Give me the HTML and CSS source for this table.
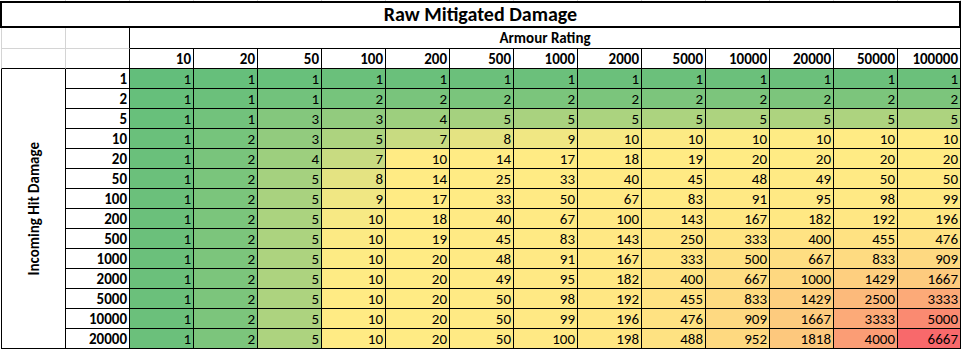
FILE: index.html
```html
<!DOCTYPE html>
<html lang="en">
<head>
<meta charset="utf-8">
<title>Raw Mitigated Damage</title>
<link rel="stylesheet" href="styles.css">
</head>
<body>
<div class="sheet">
  <div class="stubs">
    <div></div><div></div><div></div><div></div><div></div><div></div><div></div><div></div><div></div><div></div><div></div><div></div><div></div><div></div><div></div>
  </div>
  <div class="title">Raw Mitigated Damage</div>
  <div class="grid" id="grid">
    <div class="c g ga"></div><div class="c g gb"></div><div class="c armour">Armour Rating</div>
    <div class="c g ga gl"></div><div class="c g gb gl"></div>
    <div class="c h">10</div><div class="c h">20</div><div class="c h">50</div><div class="c h">100</div><div class="c h">200</div><div class="c h">500</div><div class="c h">1000</div><div class="c h">2000</div><div class="c h">5000</div><div class="c h">10000</div><div class="c h">20000</div><div class="c h">50000</div><div class="c h">100000</div>
    <div class="c side"><span>Incoming Hit Damage</span></div>

    <div class="c h rl">1</div><div class="c v">1</div><div class="c v">1</div><div class="c v">1</div><div class="c v">1</div><div class="c v">1</div><div class="c v">1</div><div class="c v">1</div><div class="c v">1</div><div class="c v">1</div><div class="c v">1</div><div class="c v">1</div><div class="c v">1</div><div class="c v">1</div>
    <div class="c h rl">2</div><div class="c v">1</div><div class="c v">1</div><div class="c v">1</div><div class="c v">2</div><div class="c v">2</div><div class="c v">2</div><div class="c v">2</div><div class="c v">2</div><div class="c v">2</div><div class="c v">2</div><div class="c v">2</div><div class="c v">2</div><div class="c v">2</div>
    <div class="c h rl">5</div><div class="c v">1</div><div class="c v">1</div><div class="c v">3</div><div class="c v">3</div><div class="c v">4</div><div class="c v">5</div><div class="c v">5</div><div class="c v">5</div><div class="c v">5</div><div class="c v">5</div><div class="c v">5</div><div class="c v">5</div><div class="c v">5</div>
    <div class="c h rl">10</div><div class="c v">1</div><div class="c v">2</div><div class="c v">3</div><div class="c v">5</div><div class="c v">7</div><div class="c v">8</div><div class="c v">9</div><div class="c v">10</div><div class="c v">10</div><div class="c v">10</div><div class="c v">10</div><div class="c v">10</div><div class="c v">10</div>
    <div class="c h rl">20</div><div class="c v">1</div><div class="c v">2</div><div class="c v">4</div><div class="c v">7</div><div class="c v">10</div><div class="c v">14</div><div class="c v">17</div><div class="c v">18</div><div class="c v">19</div><div class="c v">20</div><div class="c v">20</div><div class="c v">20</div><div class="c v">20</div>
    <div class="c h rl">50</div><div class="c v">1</div><div class="c v">2</div><div class="c v">5</div><div class="c v">8</div><div class="c v">14</div><div class="c v">25</div><div class="c v">33</div><div class="c v">40</div><div class="c v">45</div><div class="c v">48</div><div class="c v">49</div><div class="c v">50</div><div class="c v">50</div>
    <div class="c h rl">100</div><div class="c v">1</div><div class="c v">2</div><div class="c v">5</div><div class="c v">9</div><div class="c v">17</div><div class="c v">33</div><div class="c v">50</div><div class="c v">67</div><div class="c v">83</div><div class="c v">91</div><div class="c v">95</div><div class="c v">98</div><div class="c v">99</div>
    <div class="c h rl">200</div><div class="c v">1</div><div class="c v">2</div><div class="c v">5</div><div class="c v">10</div><div class="c v">18</div><div class="c v">40</div><div class="c v">67</div><div class="c v">100</div><div class="c v">143</div><div class="c v">167</div><div class="c v">182</div><div class="c v">192</div><div class="c v">196</div>
    <div class="c h rl">500</div><div class="c v">1</div><div class="c v">2</div><div class="c v">5</div><div class="c v">10</div><div class="c v">19</div><div class="c v">45</div><div class="c v">83</div><div class="c v">143</div><div class="c v">250</div><div class="c v">333</div><div class="c v">400</div><div class="c v">455</div><div class="c v">476</div>
    <div class="c h rl">1000</div><div class="c v">1</div><div class="c v">2</div><div class="c v">5</div><div class="c v">10</div><div class="c v">20</div><div class="c v">48</div><div class="c v">91</div><div class="c v">167</div><div class="c v">333</div><div class="c v">500</div><div class="c v">667</div><div class="c v">833</div><div class="c v">909</div>
    <div class="c h rl">2000</div><div class="c v">1</div><div class="c v">2</div><div class="c v">5</div><div class="c v">10</div><div class="c v">20</div><div class="c v">49</div><div class="c v">95</div><div class="c v">182</div><div class="c v">400</div><div class="c v">667</div><div class="c v">1000</div><div class="c v">1429</div><div class="c v">1667</div>
    <div class="c h rl">5000</div><div class="c v">1</div><div class="c v">2</div><div class="c v">5</div><div class="c v">10</div><div class="c v">20</div><div class="c v">50</div><div class="c v">98</div><div class="c v">192</div><div class="c v">455</div><div class="c v">833</div><div class="c v">1429</div><div class="c v">2500</div><div class="c v">3333</div>
    <div class="c h rl">10000</div><div class="c v">1</div><div class="c v">2</div><div class="c v">5</div><div class="c v">10</div><div class="c v">20</div><div class="c v">50</div><div class="c v">99</div><div class="c v">196</div><div class="c v">476</div><div class="c v">909</div><div class="c v">1667</div><div class="c v">3333</div><div class="c v">5000</div>
    <div class="c h rl">20000</div><div class="c v">1</div><div class="c v">2</div><div class="c v">5</div><div class="c v">10</div><div class="c v">20</div><div class="c v">50</div><div class="c v">100</div><div class="c v">198</div><div class="c v">488</div><div class="c v">952</div><div class="c v">1818</div><div class="c v">4000</div><div class="c v">6667</div>
  </div>
</div>
<script src="script.js"></script>
</body>
</html>
```

FILE: styles.css
```css
html, body {
  margin: 0;
  padding: 0;
  background: #ffffff;
}

body {
  width: 962px;
  height: 349px;
  overflow: hidden;
  font-family: Carlito, Calibri, Lato, "Liberation Sans", sans-serif;
  font-size: 15px;
  color: #000000;
}

.sheet {
  display: flex;
  flex-direction: column;
}

.stubs {
  display: grid;
  grid-template-columns: 65px repeat(13, 64px) 63px;
  height: 1px;
  margin-left: 1px;
}

.stubs div {
  border-right: 1px solid #d4d4d4;
}

.title {
  box-sizing: border-box;
  width: 961px;
  height: 27px;
  border: 2px solid #000000;
  font-weight: bold;
  font-size: 20px;
  line-height: 22px;
  text-align: center;
}

.grid {
  display: grid;
  grid-template-columns: 65px repeat(13, 64px) 63px;
  grid-template-rows: 21px 20px repeat(14, 20px);
  margin-left: 1px;
}

.c {
  box-sizing: border-box;
  border-right: 1px solid #000000;
  border-bottom: 1px solid #000000;
  display: flex;
  align-items: flex-end;
  justify-content: flex-end;
  padding: 0 2px 1px 0;
  line-height: 16px;
  white-space: nowrap;
}

.g {
  border-bottom-color: #d4d4d4;
  border-right-color: #d4d4d4;
}

.ga {
  border-left: 1px solid #d4d4d4;
}

.gb {
  border-right-color: #000000;
}

.gl {
  border-bottom-color: #000000;
}

.armour {
  grid-column: 3 / span 13;
  justify-content: center;
  font-weight: bold;
  font-size: 15px;
  padding: 0 0 2px 0;
}

.h {
  font-weight: bold;
}

.side {
  grid-column: 1;
  grid-row: 3 / span 14;
  border-left: 1px solid #000000;
  justify-content: center;
  align-items: center;
  padding: 0;
  font-weight: bold;
}

.side span {
  writing-mode: vertical-rl;
  transform: rotate(180deg);
}
```

FILE: script.js
```js
(function () {
  var grid = document.getElementById('grid');
  var armour = Array.prototype.map.call(grid.querySelectorAll('.h:not(.rl)'), function (el) {
    return parseFloat(el.textContent);
  });
  var rowLabels = grid.querySelectorAll('.rl');
  var cells = [];
  var values = [];
  rowLabels.forEach(function (label) {
    var d = parseFloat(label.textContent);
    var el = label.nextElementSibling;
    for (var i = 0; i < armour.length && el; i++) {
      var a = armour[i];
      var v = a * d / (a + 10 * d);
      cells.push({ el: el, v: v });
      values.push(v);
      el = el.nextElementSibling;
    }
  });
  var sorted = values.slice().sort(function (x, y) { return x - y; });
  var n = sorted.length;
  var min = sorted[0];
  var max = sorted[n - 1];
  var rank = 0.5 * (n - 1);
  var lo = Math.floor(rank);
  var mid = sorted[lo] + (sorted[Math.min(lo + 1, n - 1)] - sorted[lo]) * (rank - lo);
  var green = [99, 190, 123];
  var yellow = [255, 235, 132];
  var red = [248, 105, 107];
  function mix(c1, c2, t) {
    t = Math.max(0, Math.min(1, t));
    return 'rgb(' + c1.map(function (c, i) {
      return Math.round(c + (c2[i] - c) * t);
    }).join(',') + ')';
  }
  cells.forEach(function (c) {
    var color;
    if (c.v <= mid) {
      color = mix(green, yellow, (c.v - min) / (mid - min));
    } else {
      color = mix(yellow, red, (c.v - mid) / (max - mid));
    }
    c.el.style.backgroundColor = color;
  });
})();
```
